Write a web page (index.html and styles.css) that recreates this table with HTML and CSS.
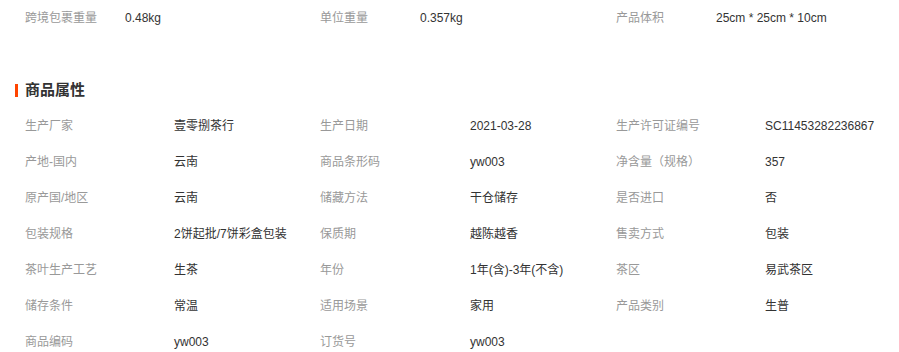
FILE: index.html
```html
<!DOCTYPE html>
<html lang="zh-CN">
<head>
<meta charset="utf-8">
<link rel="stylesheet" href="styles.css">
</head>
<body>
<div class="page">
  <div class="pack-row">
    <span class="lbl">跨境包裹重量</span><span class="val">0.48kg</span>
    <span class="lbl">单位重量</span><span class="val">0.357kg</span>
    <span class="lbl">产品体积</span><span class="val">25cm * 25cm * 10cm</span>
  </div>
  <h2 class="section-title">商品属性</h2>
  <div class="attr-grid">
    <span class="lbl">生产厂家</span><span class="val">壹零捌茶行</span>
    <span class="lbl">生产日期</span><span class="val">2021-03-28</span>
    <span class="lbl">生产许可证编号</span><span class="val">SC11453282236867</span>

    <span class="lbl">产地-国内</span><span class="val">云南</span>
    <span class="lbl">商品条形码</span><span class="val">yw003</span>
    <span class="lbl">净含量（规格）</span><span class="val">357</span>

    <span class="lbl">原产国/地区</span><span class="val">云南</span>
    <span class="lbl">储藏方法</span><span class="val">干仓储存</span>
    <span class="lbl">是否进口</span><span class="val">否</span>

    <span class="lbl">包装规格</span><span class="val">2饼起批/7饼彩盒包装</span>
    <span class="lbl">保质期</span><span class="val">越陈越香</span>
    <span class="lbl">售卖方式</span><span class="val">包装</span>

    <span class="lbl">茶叶生产工艺</span><span class="val">生茶</span>
    <span class="lbl">年份</span><span class="val">1年(含)-3年(不含)</span>
    <span class="lbl">茶区</span><span class="val">易武茶区</span>

    <span class="lbl">储存条件</span><span class="val">常温</span>
    <span class="lbl">适用场景</span><span class="val">家用</span>
    <span class="lbl">产品类别</span><span class="val">生普</span>

    <span class="lbl">商品编码</span><span class="val">yw003</span>
    <span class="lbl">订货号</span><span class="val">yw003</span>
  </div>
</div>
</body>
</html>
```
FILE: styles.css
```css
html, body {
  margin: 0;
  padding: 0;
  background: #fff;
}
body {
  font-family: "Liberation Sans", "Noto Sans CJK SC", sans-serif;
  font-size: 12px;
  color: #333;
}
.page {
  padding: 0 0 0 15px;
  width: 884px;
  overflow: hidden;
}
.pack-row {
  display: grid;
  grid-template-columns: 100px 195px 100px 196px 100px auto;
  padding-left: 10px;
  height: 36px;
  line-height: 36px;
}
.lbl {
  color: #999;
  white-space: nowrap;
}
.val {
  color: #333;
  white-space: nowrap;
}
.section-title {
  margin: 36px 0 0 0;
  height: 36px;
  line-height: 36px;
  font-size: 15px;
  font-weight: bold;
  color: #333;
  display: flex;
  align-items: center;
  gap: 7px;
}
.section-title::before {
  content: "";
  width: 3px;
  height: 13px;
  background: #ff4400;
}
.attr-grid {
  display: grid;
  grid-template-columns: 149px 146px 150px 146px 149px auto;
  grid-auto-rows: 36px;
  line-height: 36px;
  padding-left: 10px;
}
```
